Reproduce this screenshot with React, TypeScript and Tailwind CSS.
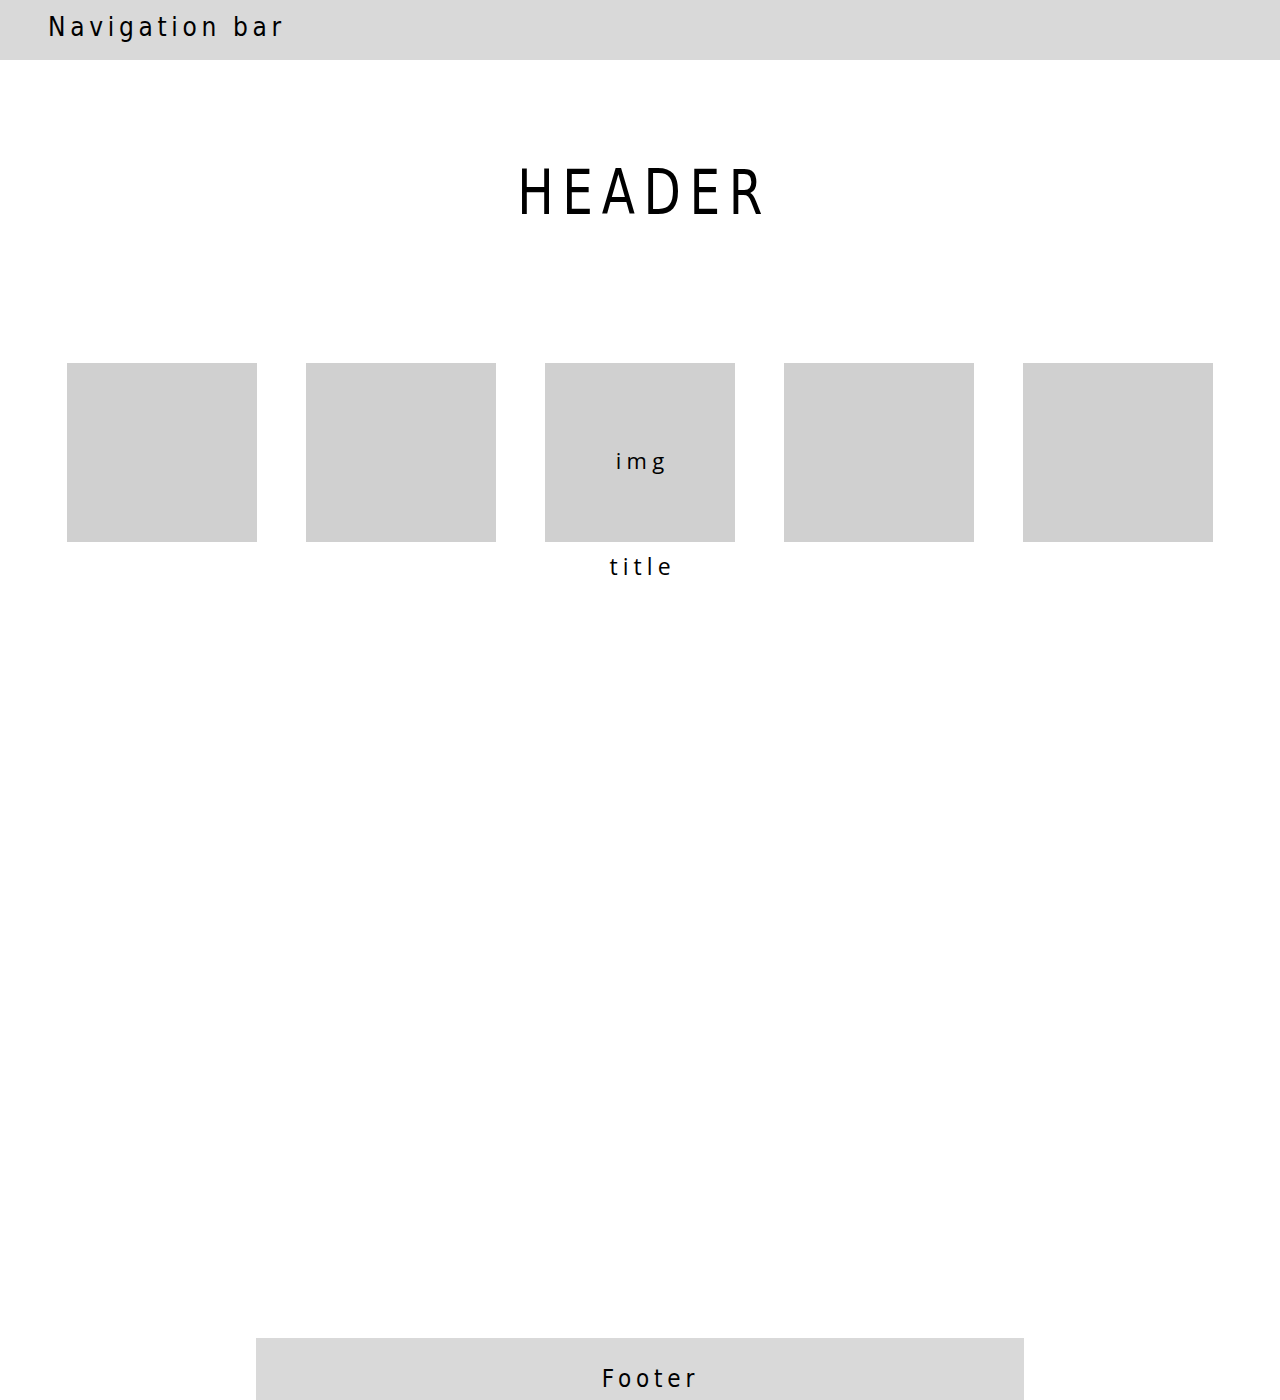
import React from 'react';

const cards = ['', '', 'img', '', ''];

export default function App() {
  return (
    <div className="min-h-[1400px] bg-white flex flex-col text-black">
      {/* Navigation */}
      <nav className="h-[60px] bg-[#d9d9d9] flex items-center px-[48px] pb-[5px]">
        <span className="font-['DejaVu_Sans_Condensed',sans-serif] text-[26px] tracking-[0.18em]">Navigation bar</span>
      </nav>

      {/* Header */}
      <header className="pt-[98px] flex justify-center">
        <h1 className="font-['DejaVu_Sans_Condensed',sans-serif] text-[62px] leading-[70px] tracking-[0.16em] pl-[0.16em] scale-x-[0.87]">HEADER</h1>
      </header>

      {/* Gallery */}
      <section className="mt-[135px] flex justify-center gap-[49px]">
        {cards.map((label, i) => (
          <div key={i} className="flex flex-col items-center w-[190px]">
            <div className="w-[190px] h-[179px] bg-[#d0d0d0] flex items-center justify-center">
              {label && (
                <span className="font-['Open_Sans',sans-serif] text-[22px] tracking-[0.24em] pl-[0.24em] mt-[16px]">{label}</span>
              )}
            </div>
            {i === 2 && (
              <span className="font-['Open_Sans',sans-serif] text-[23px] leading-[48px] tracking-[0.22em] pl-[0.22em]">title</span>
            )}
          </div>
        ))}
      </section>

      <div className="flex-1" />

      {/* Footer */}
      <footer className="mx-auto w-[768px] h-[62px] bg-[#d9d9d9] flex items-end justify-center pb-[3px]">
        <span className="font-['DejaVu_Sans_Condensed',sans-serif] text-[24px] tracking-[0.2em] pl-[0.2em] ml-[16px]">Footer</span>
      </footer>
    </div>
  );
}
